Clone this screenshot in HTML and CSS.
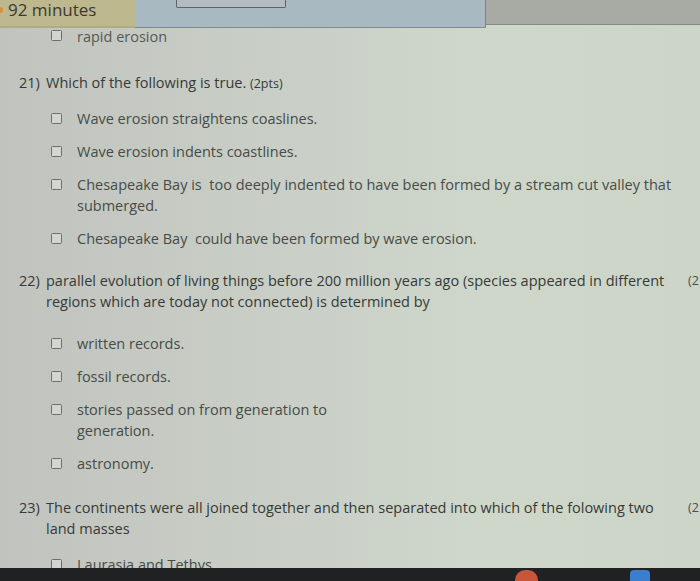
FILE: index.html
```html
<!DOCTYPE html>
<html>
<head>
<meta charset="utf-8">
<link rel="stylesheet" href="styles.css">
</head>
<body>
<header class="topbar">
  <div class="timer"><span class="dot"></span><span class="ttext">92 minutes</span></div>
  <div class="mid"><div class="btn"></div></div>
  <div class="rest"></div>
</header>
<main class="content">
  <div class="opt first"><span class="box"></span><span class="otext">rapid erosion</span></div>

  <section class="q q21">
    <div class="qrow"><span class="num">21)</span><span class="qtext">Which of the following is true. <small>(2pts)</small></span></div>
    <div class="opts">
      <div class="opt"><span class="box"></span><span class="otext">Wave erosion straightens coaslines.</span></div>
      <div class="opt"><span class="box"></span><span class="otext">Wave erosion indents coastlines.</span></div>
      <div class="opt"><span class="box"></span><span class="otext">Chesapeake Bay is&nbsp; too deeply indented to have been formed by a stream cut valley that<br>submerged.</span></div>
      <div class="opt"><span class="box"></span><span class="otext">Chesapeake Bay&nbsp; could have been formed by wave erosion.</span></div>
    </div>
  </section>

  <section class="q q22">
    <div class="qrow"><span class="num">22)</span><span class="qtext">parallel evolution of living things before 200 million years ago (species appeared in different<br>regions which are today not connected) is determined by</span><span class="pts">(2</span></div>
    <div class="opts">
      <div class="opt"><span class="box"></span><span class="otext">written records.</span></div>
      <div class="opt"><span class="box"></span><span class="otext">fossil records.</span></div>
      <div class="opt"><span class="box"></span><span class="otext">stories passed on from generation to<br>generation.</span></div>
      <div class="opt"><span class="box"></span><span class="otext">astronomy.</span></div>
    </div>
  </section>

  <section class="q q23">
    <div class="qrow"><span class="num">23)</span><span class="qtext">The continents were all joined together and then separated into which of the folowing two<br>land masses</span><span class="pts">(2</span></div>
    <div class="opts">
      <div class="opt"><span class="box"></span><span class="otext">Laurasia and Tethys.</span></div>
    </div>
  </section>
</main>
<footer class="taskbar">
  <span class="ico orange"></span>
  <span class="ico blue"></span>
</footer>
</body>
</html>
```
FILE: styles.css
```css
html, body {
  margin: 0;
  padding: 0;
  width: 700px;
  height: 581px;
  overflow: hidden;
}
body {
  font-family: "Open Sans", "DejaVu Sans", sans-serif;
  background: linear-gradient(90deg, #c1c4be 0%, #c8cdc6 35%, #cfd7cb 70%, #cdd5c9 100%);
  color: #3a3e3a;
}
.topbar {
  display: flex;
  height: 28px;
}
.timer {
  width: 135px;
  background: #bdb88e;
  font-size: 17px;
  line-height: 20px;
  color: #3a3a32;
  padding-left: 8px;
  box-sizing: border-box;
  position: relative;
  border-bottom: 2px solid #b0ab84;
  white-space: nowrap;
}
.ttext {
  display: inline-block;
}
.dot {
  position: absolute;
  left: 0;
  top: 7px;
  width: 3px;
  height: 6px;
  border-radius: 0 3px 3px 0;
  background: #d9903a;
}
.mid {
  width: 350px;
  background: #a8b9c1;
  border-bottom: 1px solid #7f8b90;
  border-right: 1px solid #7d8487;
}
.btn {
  margin-left: 41px;
  width: 108px;
  height: 7px;
  border: 1px solid #5e6466;
  border-top: none;
  background: #b3bdc1;
  border-radius: 0 0 2px 2px;
}
.rest {
  flex: 1;
  background: #a8aaa4;
  border-bottom: 1px solid #868883;
  height: 24px;
}
.content {
  display: flex;
  flex-direction: column;
}
.opt {
  display: flex;
  align-items: flex-start;
  padding-left: 51px;
  font-size: 14.5px;
  line-height: 21px;
  color: #474b47;
}
.opt + .opt {
  margin-top: 12px;
}
.opt.first {
  line-height: 18px;
  color: #555954;
}
.box {
  flex: 0 0 auto;
  width: 9px;
  height: 9px;
  border: 1.5px solid #6c706b;
  border-radius: 1.5px;
  background: #d2d6d0;
  margin-top: 4.5px;
  margin-right: 15px;
}
.first .box {
  margin-top: 2px;
}
.otext {
  white-space: nowrap;
}
.q21 { margin-top: 26px; }
.q22 { margin-top: 21px; }
.q23 { margin-top: 23px; }
.qrow {
  display: flex;
  align-items: flex-start;
  font-size: 14.5px;
  line-height: 21px;
  color: #363a37;
}
.num {
  width: 27px;
  padding-left: 19px;
  flex: 0 0 auto;
}
.qtext {
  width: 642px;
  flex: 0 0 auto;
  white-space: nowrap;
}
.qtext small {
  font-size: 12.5px;
}
.pts {
  flex: 0 0 auto;
  white-space: nowrap;
  font-size: 12.5px;
  color: #4a4e4a;
}
.q21 .opts { margin-top: 14px; }
.q22 .opts { margin-top: 21px; }
.q23 .opts { margin-top: 15px; }
.taskbar {
  position: fixed;
  left: 0;
  right: 0;
  bottom: 0;
  height: 13px;
  background: #1f2123;
  overflow: hidden;
}
.ico {
  position: absolute;
  top: 2px;
  height: 20px;
}
.orange {
  left: 515px;
  width: 23px;
  background: #c9553a;
  border-radius: 11px;
}
.blue {
  left: 630px;
  width: 20px;
  background: #3a7fcf;
  border-radius: 4px;
}
```
